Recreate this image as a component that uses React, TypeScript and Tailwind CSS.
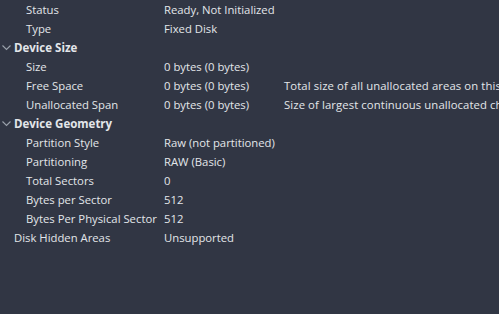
import React from 'react'

type Row = {
    label: string
    value?: string
    desc?: string
    level: 0 | 1
    header?: boolean
}

const rows: Row[] = [
    { label: 'Status', value: 'Ready, Not Initialized', level: 1 },
    { label: 'Type', value: 'Fixed Disk', level: 1 },
    { label: 'Device Size', level: 0, header: true },
    { label: 'Size', value: '0 bytes (0 bytes)', level: 1 },
    { label: 'Free Space', value: '0 bytes (0 bytes)', desc: 'Total size of all unallocated areas on this disk', level: 1 },
    { label: 'Unallocated Span', value: '0 bytes (0 bytes)', desc: 'Size of largest continuous unallocated chunk', level: 1 },
    { label: 'Device Geometry', level: 0, header: true },
    { label: 'Partition Style', value: 'Raw (not partitioned)', level: 1 },
    { label: 'Partitioning', value: 'RAW (Basic)', level: 1 },
    { label: 'Total Sectors', value: '0', level: 1 },
    { label: 'Bytes per Sector', value: '512', level: 1 },
    { label: 'Bytes Per Physical Sector', value: '512', level: 1 },
    { label: 'Disk Hidden Areas', value: 'Unsupported', level: 0 },
]

const Chevron = () => (
    <svg width="9" height="6" viewBox="0 0 9 6" className="absolute left-[2px] top-[7px]">
        <path d="M0.5 0.5 L4.5 4.5 L8.5 0.5" fill="none" stroke="#9aa1ab" strokeWidth="1.1" />
    </svg>
)

export default function App() {
    return (
        <div
            className="h-[314px] w-[499px] overflow-hidden bg-[#313644] text-[11.3px] text-[#e3e6ea]"
            style={{ fontFamily: '"Open Sans", "Noto Sans", sans-serif' }}
        >
            {rows.map((r) => (
                <div key={r.label} className="relative flex h-[19px] items-center whitespace-nowrap pt-[1px]">
                    {r.header && <Chevron />}
                    <div
                        className={
                            (r.level === 1 ? 'pl-[26px] ' : 'pl-[14px] ') +
                            'w-[164px] shrink-0 ' +
                            (r.header ? 'font-bold text-[11.5px]' : '')
                        }
                    >
                        {r.label}
                    </div>
                    <div className="w-[120px] shrink-0">{r.value}</div>
                    <div className="tracking-[0.1px]">{r.desc}</div>
                </div>
            ))}
        </div>
    )
}
